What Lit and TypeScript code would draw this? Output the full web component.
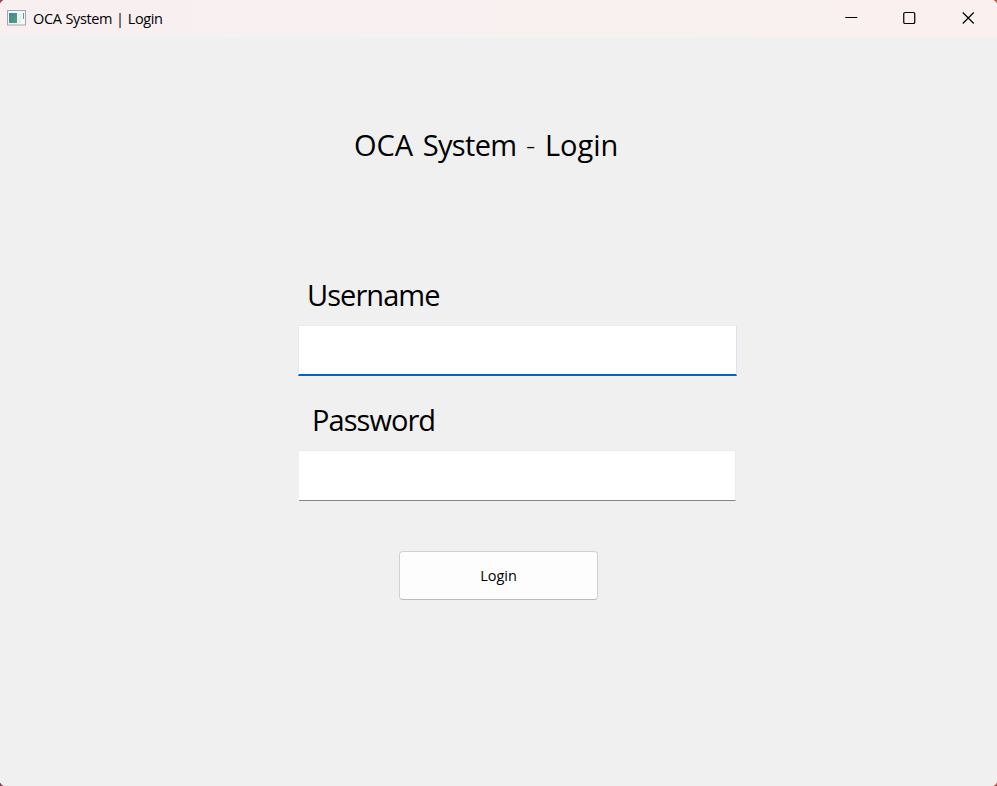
import { LitElement, html, css } from "lit";
import { customElement } from "lit/decorators.js";

@customElement("title-bar")
class TitleBar extends LitElement {
  static styles = css`
    :host { display: flex; align-items: center; height: 37px; padding-left: 7px; box-sizing: border-box;
      background: linear-gradient(90deg, #f8eff1, #f9f0ef); }
    .name { margin-left: 7px; font-size: 14.5px; line-height: 20px; letter-spacing: -0.37px; word-spacing: 0.6px; white-space: pre; }
    .icon { display: block; margin-top: -2px; }
    .controls { display: flex; margin-left: auto; }
    .control { width: 58.5px; height: 37px; display: block; }
  `;
  render() {
    return html`
      <svg class="icon" width="19" height="16" viewBox="0 0 19 16">
        <defs>
          <linearGradient id="pane" x1="0" y1="0" x2="1" y2="1">
            <stop offset="0" stop-color="#4a7fa8" /><stop offset="1" stop-color="#4da376" />
          </linearGradient>
        </defs>
        <rect x=".5" y=".5" width="18" height="14.5" fill="#f6f8f8" stroke="#a0a7ad" />
        <rect x="2" y="3" width="8" height="10" fill="url(#pane)" />
        <rect x="11" y="3" width="3" height="10" fill="#e9eeee" />
        <rect x="16" y="3" width="1" height="6" fill="#57a09a" />
      </svg>
      <span class="name">OCA System | Login</span>
      <div class="controls">
        <svg class="control" viewBox="0 0 58 37"><path d="M23 17.5h12" stroke="#000" /></svg>
        <svg class="control" viewBox="0 0 58 37"><rect x="23.5" y="12.5" width="11" height="11" rx="1.3" fill="none" stroke="#000" stroke-width="1.2" /></svg>
        <svg class="control" viewBox="0 0 58 37"><path d="M23.5 12.5l11 11M34.5 12.5l-11 11" stroke="#000" stroke-width="1.2" /></svg>
      </div>
    `;
  }
}

@customElement("app-root")
class AppRoot extends LitElement {
  static styles = css`
    :host { display: flex; flex-direction: column; position: relative; width: 997px; height: 786px; overflow: hidden;
      background: #f0f0f0; color: #000; font-family: "Open Sans", "Noto Sans", sans-serif; }
    .corner { position: absolute; width: 6px; height: 6px; }
    .tl { top: 0; left: 0; background: radial-gradient(circle at 100% 100%, transparent 6px, #a8405c 6.7px); }
    .tr { top: 0; right: 0; background: radial-gradient(circle at 0 100%, transparent 6px, #d0573c 6.7px); }
    .bl { bottom: 0; left: 0; background: radial-gradient(circle at 100% 0, transparent 6px, #7c4255 6.7px); }
    .br { bottom: 0; right: 0; background: radial-gradient(circle at 0 0, transparent 6px, #b55038 6.7px); }
    .form { display: flex; flex-direction: column; width: 439px; margin-left: 298px; padding-top: 88px; }
    .big { font-size: 29px; line-height: 40px; font-weight: 400; margin: 0; white-space: pre; }
    .title { margin-left: 56px; word-spacing: 2px; }
    .tight { letter-spacing: -0.65px; }
    .dash { font-weight: 300; }
    .user { margin-left: 9px; margin-top: 110px; letter-spacing: -0.95px; }
    .pass { margin-left: 14px; margin-top: 24px; letter-spacing: -0.95px; }
    .field { box-sizing: border-box; height: 51px; margin: 10px 0 0; padding: 0 10px; border: 1px solid #ebebeb; border-radius: 0;
      background: #fff; outline: none; font: inherit; }
    .active { border-right-color: #dce3ec; border-bottom: 2px solid #0067c0; }
    .idle { margin-left: 1px; border-left: 0; border-bottom-color: #868686; width: 437px; }
    .login { box-sizing: border-box; width: 199px; height: 49px; margin: 50px 0 0 101px; border: 1px solid #d0d0d0;
      border-bottom-color: #bababa; border-radius: 4px; background: #fdfdfd; color: #000; font: inherit; font-size: 14.5px; padding: 0; }
  `;
  render() {
    return html`
      <title-bar></title-bar>
      <div class="form">
        <h1 class="big title">OCA <span class="tight">System</span> <span class="dash">-</span> Login</h1>
        <label class="big user" for="u">Username</label>
        <input class="field active" id="u" />
        <label class="big pass" for="p">Password</label>
        <input class="field idle" id="p" type="password" />
        <button class="login">Login</button>
      </div>
      <i class="corner tl"></i><i class="corner tr"></i><i class="corner bl"></i><i class="corner br"></i>
    `;
  }
}
